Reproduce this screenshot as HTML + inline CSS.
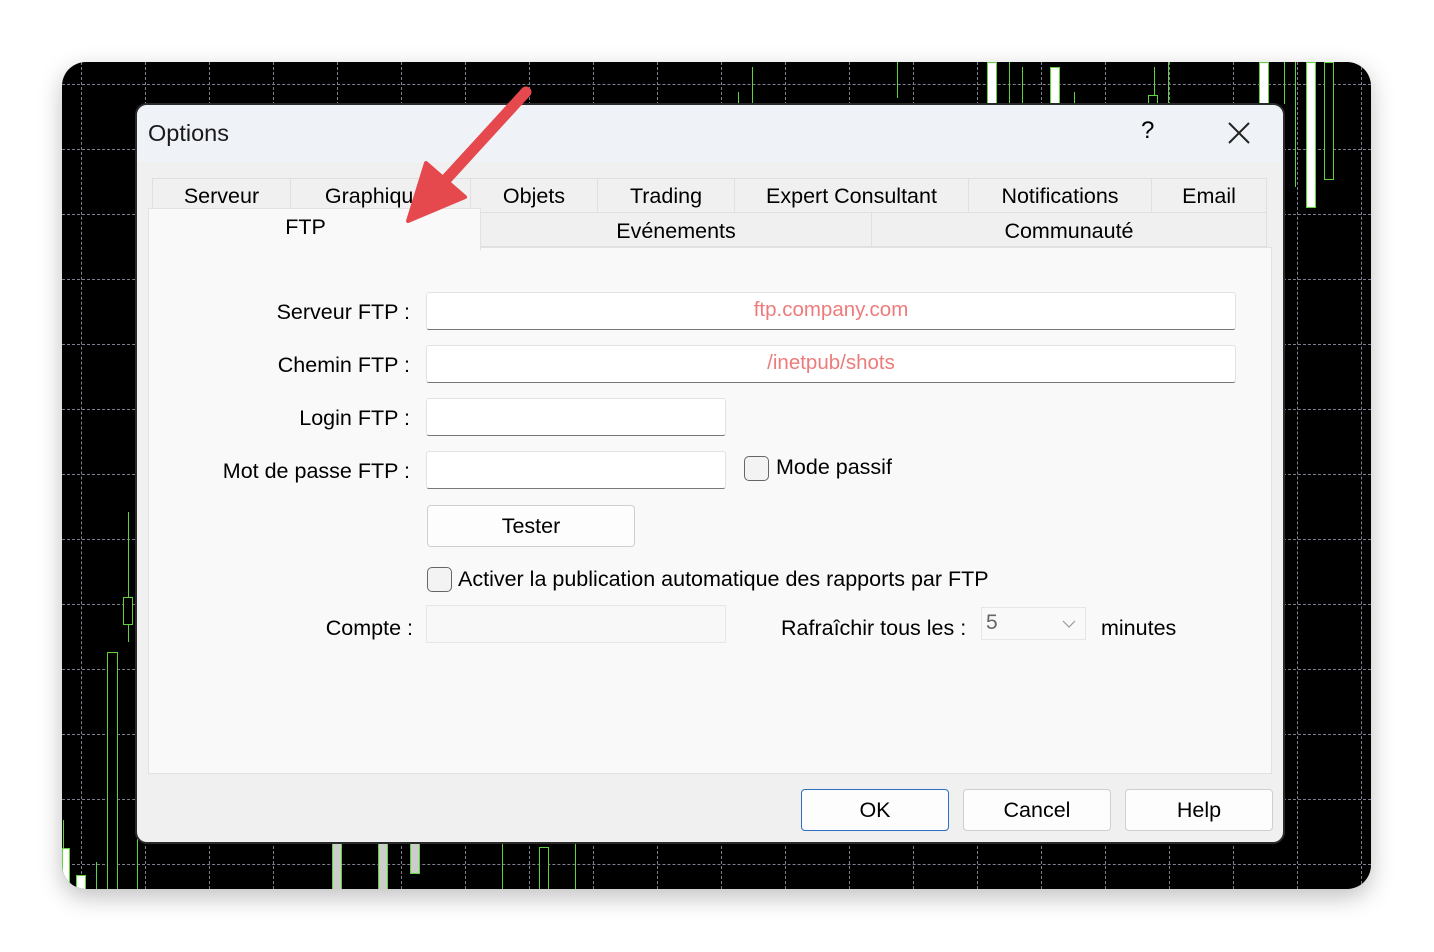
<!DOCTYPE html>
<html><head><meta charset="utf-8"><style>
*{margin:0;padding:0;box-sizing:border-box}
body{width:1434px;height:952px;background:#fff;position:relative;overflow:hidden;font-family:"Liberation Sans",sans-serif;color:#000}
.a{position:absolute}
#chart{left:62px;top:62px;width:1309px;height:827px;background:#000;border-radius:24px;overflow:hidden;box-shadow:0 8px 24px rgba(0,0,0,.25)}
.vl{position:absolute;top:0;bottom:0;width:0;border-left:1px dashed #7a8090}
.hl{position:absolute;left:0;right:0;height:0;border-top:1px dashed #7a8090}
.g{position:absolute;width:1px;background:#5fd33a}
.c{position:absolute;border:1px solid #5fd33a;background:#eee}
#dlg{left:135px;top:103px;width:1150px;height:741px;background:#f0f0f0;border:2px solid #2a2a2a;border-radius:12px;overflow:hidden}
#title{left:0;top:0;width:100%;height:57px;background:#eff2f7}
.t{position:absolute;height:35px;border:1px solid #e0e0e0;background:#f0f0f0;font-size:21.5px;text-align:center;line-height:34px}
.lbl{position:absolute;font-size:21.5px;text-align:right;width:300px}
.in{position:absolute;background:#fff;border:1px solid #e3e3e3;border-bottom:1.5px solid #777;border-radius:3px}
.btn{position:absolute;background:#fdfdfd;border:1px solid #cfcfcf;border-radius:4px;font-size:21.5px;text-align:center}
.cb{position:absolute;width:25px;height:25px;border:1.5px solid #666;border-radius:5px;background:#f3f3f3}
</style></head><body>
<div id="chart" class="a">
<div class="vl" style="left:19px"></div><div class="vl" style="left:83px"></div><div class="vl" style="left:147px"></div><div class="vl" style="left:211px"></div><div class="vl" style="left:275px"></div><div class="vl" style="left:339px"></div><div class="vl" style="left:403px"></div><div class="vl" style="left:467px"></div><div class="vl" style="left:531px"></div><div class="vl" style="left:595px"></div><div class="vl" style="left:659px"></div><div class="vl" style="left:723px"></div><div class="vl" style="left:787px"></div><div class="vl" style="left:851px"></div><div class="vl" style="left:915px"></div><div class="vl" style="left:979px"></div><div class="vl" style="left:1043px"></div><div class="vl" style="left:1107px"></div><div class="vl" style="left:1171px"></div><div class="vl" style="left:1235px"></div><div class="vl" style="left:1299px"></div>
<div class="hl" style="top:22px"></div><div class="hl" style="top:87px"></div><div class="hl" style="top:152px"></div><div class="hl" style="top:217px"></div><div class="hl" style="top:282px"></div><div class="hl" style="top:347px"></div><div class="hl" style="top:412px"></div><div class="hl" style="top:477px"></div><div class="hl" style="top:542px"></div><div class="hl" style="top:607px"></div><div class="hl" style="top:672px"></div><div class="hl" style="top:737px"></div><div class="hl" style="top:802px"></div>
<div class="g" style="left:66px;top:450px;height:130px"></div><div class="c" style="left:61px;top:535px;width:10px;height:28px;background:#000"></div>
<div class="g" style="left:1px;top:758px;height:30px"></div><div class="c" style="left:0;top:786px;width:8px;height:41px;background:#fff"></div>
<div class="c" style="left:14px;top:813px;width:10px;height:20px;background:#fff"></div>
<div class="c" style="left:45px;top:590px;width:11px;height:240px;background:#000"></div>
<div class="g" style="left:34px;top:800px;height:30px"></div>
<div class="g" style="left:75px;top:500px;height:330px"></div>
<div class="c" style="left:270px;top:770px;width:10px;height:60px;background:#ccc"></div><div class="c" style="left:316px;top:770px;width:10px;height:60px;background:#ccc"></div><div class="c" style="left:348px;top:770px;width:10px;height:42px;background:#ccc"></div>
<div class="g" style="left:440px;top:770px;height:60px"></div><div class="g" style="left:513px;top:770px;height:60px"></div><div class="c" style="left:477px;top:785px;width:10px;height:45px;background:#000"></div>
<div class="g" style="left:690px;top:5px;height:36px"></div><div class="g" style="left:676px;top:30px;height:12px"></div><div class="g" style="left:835px;top:0;height:36px"></div>
<div class="c" style="left:925px;top:0;width:10px;height:42px;background:#fff"></div><div class="g" style="left:947px;top:0;height:42px"></div><div class="g" style="left:960px;top:5px;height:37px"></div>
<div class="c" style="left:988px;top:5px;width:10px;height:37px;background:#fff"></div><div class="g" style="left:1012px;top:30px;height:12px"></div>
<div class="g" style="left:1092px;top:5px;height:30px"></div><div class="g" style="left:1106px;top:0;height:42px"></div><div class="c" style="left:1086px;top:33px;width:10px;height:9px;background:#000"></div>
<div class="c" style="left:1197px;top:0;width:10px;height:42px;background:#fff"></div><div class="g" style="left:1222px;top:0;height:42px"></div><div class="g" style="left:1233px;top:0;height:125px"></div>
<div class="c" style="left:1244px;top:0;width:10px;height:146px;background:#fff"></div><div class="c" style="left:1262px;top:0;width:10px;height:118px;background:#000"></div>
</div>
<div id="dlg" class="a">
<div id="title" class="a"></div>
<div class="a" style="left:11px;top:15px;font-size:23.5px;color:#1a1a1a">Options</div>
<div class="a" style="left:1004px;top:12px;font-size:24px">?</div>
<svg class="a" style="left:1090px;top:16px" width="24" height="24"><path d="M2 2L22 22M22 2L2 22" stroke="#222" stroke-width="2"/></svg>
<div class="t" style="left:15px;top:73px;width:139px">Serveur</div>
<div class="t" style="left:153px;top:73px;width:181px">Graphiques</div>
<div class="t" style="left:333px;top:73px;width:128px">Objets</div>
<div class="t" style="left:460px;top:73px;width:138px">Trading</div>
<div class="t" style="left:597px;top:73px;width:235px">Expert Consultant</div>
<div class="t" style="left:831px;top:73px;width:184px">Notifications</div>
<div class="t" style="left:1014px;top:73px;width:116px">Email</div>
<div class="t" style="left:343px;top:107px;width:392px;line-height:36px">Evénements</div>
<div class="t" style="left:734px;top:107px;width:396px;line-height:36px">Communauté</div>
<div class="a" style="left:11px;top:142px;width:1124px;height:527px;background:#f9f9f9;border:1px solid #e2e2e2"></div>
<div class="a" style="left:11px;top:103px;width:333px;height:42px;background:#f9f9f9;border:1px solid #e2e2e2;border-bottom:none;font-size:21.5px;text-align:center;line-height:36px;padding-right:18px">FTP</div>
<div class="lbl" style="left:-27px;top:195px">Serveur FTP :</div>
<div class="lbl" style="left:-27px;top:248px">Chemin FTP :</div>
<div class="lbl" style="left:-27px;top:301px">Login FTP :</div>
<div class="lbl" style="left:-27px;top:354px">Mot de passe FTP :</div>
<div class="lbl" style="left:-24px;top:511px">Compte :</div>
<div class="in" style="left:289px;top:187px;width:810px;height:38px;color:#ee7b7b;font-size:20.5px;text-align:center;line-height:34px">ftp.company.com</div>
<div class="in" style="left:289px;top:240px;width:810px;height:38px;color:#ee7b7b;font-size:20.5px;text-align:center;line-height:34px">/inetpub/shots</div>
<div class="in" style="left:289px;top:293px;width:300px;height:38px"></div>
<div class="in" style="left:289px;top:346px;width:300px;height:38px"></div>
<div class="cb" style="left:607px;top:351px"></div>
<div class="a" style="left:639px;top:350px;font-size:21.5px">Mode passif</div>
<div class="btn" style="left:290px;top:400px;width:208px;height:42px;line-height:40px">Tester</div>
<div class="cb" style="left:290px;top:462px"></div>
<div class="a" style="left:321px;top:462px;font-size:21.5px">Activer la publication automatique des rapports par FTP</div>
<div class="a" style="left:289px;top:500px;width:300px;height:38px;border:1px solid #e6e6e6;background:#f8f8f8"></div>
<div class="a" style="left:644px;top:511px;font-size:21.5px">Rafraîchir tous les :</div>
<div class="a" style="left:844px;top:502px;width:105px;height:33px;border:1px solid #e6e6e6;background:#f9f9f9;font-size:21px;color:#666;padding-left:4px;line-height:30px">5</div>
<svg class="a" style="left:925px;top:514px" width="14" height="10"><path d="M1 2L7 8L13 2" stroke="#999" fill="none" stroke-width="1.2"/></svg>
<div class="a" style="left:964px;top:511px;font-size:21.5px">minutes</div>
<div class="btn" style="left:664px;top:684px;width:148px;height:42px;line-height:40px;border-color:#2f6fc1">OK</div>
<div class="btn" style="left:826px;top:684px;width:148px;height:42px;line-height:40px">Cancel</div>
<div class="btn" style="left:988px;top:684px;width:148px;height:42px;line-height:40px">Help</div>
</div>
<svg class="a" style="left:0;top:0" width="1434" height="952"><path d="M526 92L440 186" stroke="#e5484d" stroke-width="11" stroke-linecap="round"/><path d="M408 221L426 163L465 197Z" fill="#e5484d" stroke="#e5484d" stroke-width="4" stroke-linejoin="round"/></svg>
</body></html>
